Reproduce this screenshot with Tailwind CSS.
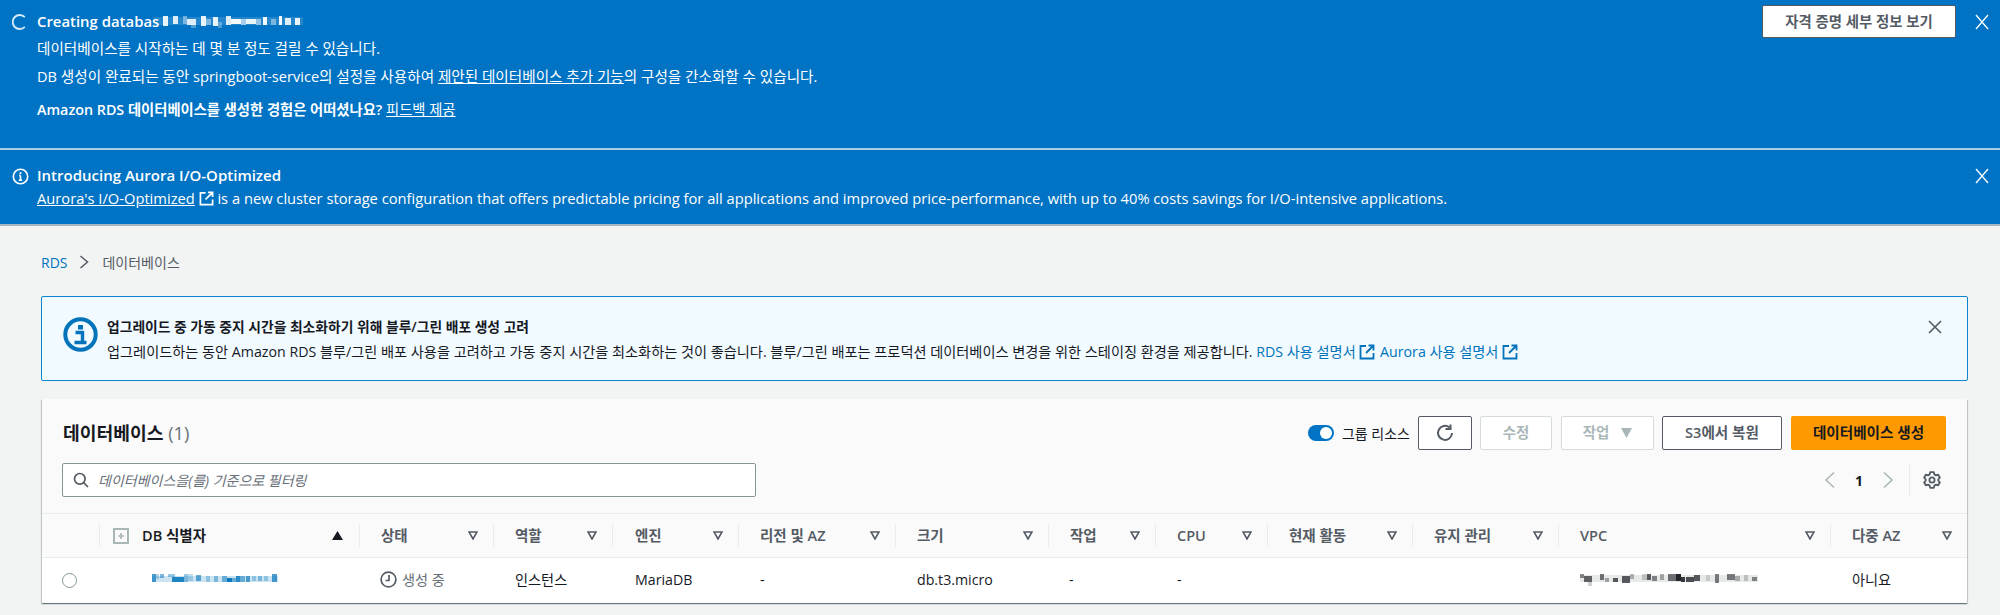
<!DOCTYPE html>
<html lang="ko"><head><meta charset="utf-8">
<script src="https://cdn.jsdelivr.net/npm/@tailwindcss/browser@4"></script>
<title>RDS</title></head>
<body class="w-[2000px] h-[615px] overflow-hidden bg-[#f2f3f3] text-[#16191f] text-[14.6px] font-['Open_Sans','Noto_Sans_CJK_KR',sans-serif]">

<section class="bg-[#0073c4] text-white h-[150px] border-b-2 border-[#a9cfe4] flex pl-[12px] pr-[10px]">
  <svg class="w-[16px] h-[16px] mt-[14px] shrink-0" viewBox="0 0 16 16" fill="none" stroke="#d8ecf8" stroke-width="1.8"><path d="M12.8 3.2A7 7 0 1 0 12.8 12.8"/></svg>
  <div class="ml-[9px] pt-[11px] flex-1">
    <div class="font-semibold leading-[20px] flex items-center text-[14.9px]"><span>Creating databas</span>
      <svg class="w-[150px] h-[14px] ml-[-6px]" viewBox="0 0 150 14" shape-rendering="crispEdges" fill="#fff">
        <rect x="0" y="3" width="150" height="8" opacity=".14"/><rect x="10" y="2" width="5" height="10" opacity=".9"/><rect x="20" y="2" width="5" height="8" opacity=".85"/><rect x="30" y="2" width="4" height="8" opacity=".4"/><rect x="34" y="5" width="9" height="6" opacity=".85"/><rect x="38" y="10" width="5" height="4" opacity=".3"/><rect x="48" y="2" width="5" height="10" opacity=".9"/><rect x="53" y="5" width="5" height="6" opacity=".4"/><rect x="60" y="3" width="5" height="9" opacity=".9"/><rect x="65" y="8" width="4" height="6" opacity=".3"/><rect x="73" y="2" width="5" height="9" opacity=".85"/><rect x="78" y="5" width="10" height="5" opacity=".95"/><rect x="88" y="5" width="5" height="6" opacity=".6"/><rect x="93" y="5" width="10" height="5" opacity=".9"/><rect x="103" y="5" width="5" height="6" opacity=".5"/><rect x="110" y="3" width="4" height="8" opacity=".95"/><rect x="118" y="5" width="5" height="6" opacity=".4"/><rect x="126" y="2" width="3" height="9" opacity=".95"/><rect x="132" y="4" width="6" height="7" opacity=".85"/><rect x="142" y="4" width="5" height="7" opacity=".9"/>
      </svg>
    </div>
    <p class="mt-[7px] leading-[20px]">데이터베이스를 시작하는 데 몇 분 정도 걸릴 수 있습니다.</p>
    <p class="mt-[8px] leading-[20px]">DB 생성이 완료되는 동안 springboot-service의 설정을 사용하여 <a class="underline">제안된 데이터베이스 추가 기능</a>의 구성을 간소화할 수 있습니다.</p>
    <p class="mt-[14px] leading-[20px] font-semibold text-[14.3px]">Amazon RDS 데이터베이스를 생성한 경험은 어떠셨나요? <a class="underline font-normal">피드백 제공</a></p>
  </div>
  <button class="w-[194px] h-[33px] mt-[5px] bg-white border border-[#545b64] rounded-[2px] text-[#545b64] text-[14.4px] font-semibold">자격 증명 세부 정보 보기</button>
  <svg class="w-[16px] h-[16px] mt-[14px] ml-[18px]" viewBox="0 0 16 16" fill="none" stroke="#fff" stroke-width="1.3"><path d="M2 1 14 15M14 1 2 15"/></svg>
</section>

<section class="bg-[#0073c4] text-white h-[76px] border-b-2 border-[#a8b6c0] flex pl-[12px] pr-[10px]">
  <svg class="w-[17px] h-[17px] mt-[18px] shrink-0" viewBox="0 0 17 17" fill="none" stroke="#fff" stroke-width="1.6"><circle cx="8.5" cy="8.5" r="7.2"/><path d="M8.5 7.5v4.5M6.8 12.2h3.4M7.2 7.4h1.3"/><path d="M8.5 4.2v1.8" stroke-width="1.8"/></svg>
  <div class="ml-[8px] pt-[15px] flex-1">
    <div class="font-semibold leading-[20px] text-[15px]">Introducing Aurora I/O-Optimized</div>
    <p class="leading-[20px] mt-[3px] text-[14.7px]"><a class="underline">Aurora's I/O-Optimized</a>
      <svg class="inline w-[15px] h-[15px] align-[-2px]" viewBox="0 0 16 16" fill="none" stroke="#fff" stroke-width="1.8"><path d="M7 2H1.5v12.5h13V9M9.5 1.5h5v5M14.5 1.5 7 9"/></svg>
      is a new cluster storage configuration that offers predictable pricing for all applications and improved price-performance, with up to 40% costs savings for I/O-intensive applications.</p>
  </div>
  <svg class="w-[16px] h-[16px] mt-[18px]" viewBox="0 0 16 16" fill="none" stroke="#fff" stroke-width="1.3"><path d="M2 1 14 15M14 1 2 15"/></svg>
</section>

<nav class="ml-[41px] mt-[26px] h-[20px] flex items-center text-[14px]">
  <a class="text-[#0073bb]">RDS</a>
  <svg class="w-[12px] h-[16px] ml-[11px] mr-[12px]" viewBox="0 0 12 16" fill="none" stroke="#545b64" stroke-width="1.5"><path d="M2.5 2 9.5 8 2.5 14"/></svg>
  <span class="text-[#545b64]">데이터베이스</span>
</nav>

<div class="ml-[41px] mt-[24px] w-[1927px] h-[85px] bg-[#f1faff] border-[1.5px] border-[#0a86d0] rounded-[2px] flex text-[14.2px]">
  <svg class="w-[35px] h-[35px] mt-[20px] ml-[21px] shrink-0" viewBox="0 0 35 35" fill="none" stroke="#0073bb"><circle cx="17.5" cy="17.5" r="15.2" stroke-width="4"/><rect x="15" y="8" width="5" height="4.5" fill="#0073bb" stroke="none"/><path d="M12.5 15.5h7v9M11.5 25.5h12" stroke-width="3.4"/></svg>
  <div class="ml-[9px] pt-[19px] flex-1 leading-[22px]">
    <div class="font-semibold text-[13.8px]">업그레이드 중 가동 중지 시간을 최소화하기 위해 블루/그린 배포 생성 고려</div>
    <p class="mt-[3px]">업그레이드하는 동안 Amazon RDS 블루/그린 배포 사용을 고려하고 가동 중지 시간을 최소화하는 것이 좋습니다. 블루/그린 배포는 프로덕션 데이터베이스 변경을 위한 스테이징 환경을 제공합니다. <a class="text-[#0073bb]">RDS 사용 설명서 <svg class="inline w-[16px] h-[16px] align-[-3px]" viewBox="0 0 16 16" fill="none" stroke="#0073bb" stroke-width="1.8"><path d="M7 2H1.5v12.5h13V9M9.5 1.5h5v5M14.5 1.5 7 9"/></svg></a> <a class="text-[#0073bb] ml-[1px]">Aurora 사용 설명서 <svg class="inline w-[16px] h-[16px] align-[-3px]" viewBox="0 0 16 16" fill="none" stroke="#0073bb" stroke-width="1.8"><path d="M7 2H1.5v12.5h13V9M9.5 1.5h5v5M14.5 1.5 7 9"/></svg></a></p>
  </div>
  <svg class="w-[16px] h-[16px] mt-[22px] mr-[24px]" viewBox="0 0 16 16" fill="none" stroke="#545b64" stroke-width="1.6"><path d="M2 2 14 14M14 2 2 14"/></svg>
</div>

<div class="ml-[42px] mt-[18px] w-[1925px] h-[204px] bg-[#fafafa] shadow-[0_1px_1px_0_rgba(0,28,36,0.4),1px_1px_1px_0_rgba(0,28,36,0.15),-1px_1px_1px_0_rgba(0,28,36,0.15)]">
  <div class="h-[115px] relative border-b border-[#eaeded] pl-[20px] pt-[17px] pr-[21px]">
    <div class="flex items-center h-[34px]">
      <h2 class="text-[18.2px] font-bold flex-1 leading-[32px] ml-[1px]">데이터베이스 <span class="font-normal text-[#687078]">(1)</span></h2>
      <span class="w-[26px] h-[16px] rounded-full bg-[#0073c4] flex items-center justify-end pr-[2px] mr-[8px]"><span class="w-[12px] h-[12px] rounded-full bg-white"></span></span>
      <span class="text-[14px] mr-[8px] text-[#16191f]">그룹 리소스</span>
      <button class="w-[54px] h-[34px] bg-white border border-[#545b64] rounded-[2px] flex items-center justify-center"><svg class="w-[18px] h-[18px]" viewBox="0 0 18 18" fill="none" stroke="#545b64" stroke-width="2"><path d="M13.5 3.5A7 7 0 1 0 16 9"/><path d="M14.5 0.5v4.5h-5"/></svg></button>
      <button class="w-[72px] h-[34px] ml-[8px] bg-white border border-[#d5dbdb] rounded-[2px] text-[#aab7b8] text-[14.4px] font-semibold">수정</button>
      <button class="w-[93px] h-[34px] ml-[9px] bg-white border border-[#d5dbdb] rounded-[2px] text-[#aab7b8] text-[14.4px] font-semibold flex items-center justify-center gap-[12px]">작업<svg class="w-[11px] h-[10px]" viewBox="0 0 11 10" fill="#aab7b8"><path d="M0 0h11L5.5 10z"/></svg></button>
      <button class="w-[120px] h-[34px] ml-[8px] bg-white border border-[#545b64] rounded-[2px] text-[#545b64] text-[14.6px] font-semibold">S3에서 복원</button>
      <button class="w-[155px] h-[34px] ml-[9px] bg-[#ff9900] rounded-[2px] text-[#16191f] text-[14.6px] font-semibold">데이터베이스 생성</button>
    </div>
    <div class="flex items-center mt-[13px] h-[34px]">
      <div class="w-[694px] h-[34px] bg-white border border-[#879596] rounded-[2px] flex items-center pl-[10px]">
        <svg class="w-[16px] h-[16px]" viewBox="0 0 16 16" fill="none" stroke="#545b64" stroke-width="1.7"><circle cx="6.8" cy="6.8" r="5.3"/><path d="M10.6 10.6 15 15"/></svg>
        <span class="ml-[9px] italic text-[#687078] text-[14px]">데이터베이스을(를) 기준으로 필터링</span>
      </div>
      <div class="flex-1"></div>
      <svg class="w-[12px] h-[18px]" viewBox="0 0 12 18" fill="none" stroke="#aab7b8" stroke-width="1.6"><path d="M10 1.5 2 9l8 7.5"/></svg>
      <span class="w-[46px] text-center font-bold text-[14px]">1</span>
      <svg class="w-[12px] h-[18px]" viewBox="0 0 12 18" fill="none" stroke="#aab7b8" stroke-width="1.6"><path d="M2 1.5 10 9l-8 7.5"/></svg>
      <span class="w-px h-[34px] bg-[#eaeded] ml-[15px]"></span>
      <svg class="w-[18px] h-[18px] ml-[13px]" viewBox="0 0 18 18" fill="none" stroke="#545b64" stroke-width="1.8"><circle cx="9" cy="9" r="2.6"/><path d="M7.2 1.2h3.6l.5 2.2 1.7 1 2.2-.7 1.7 3-1.6 1.6v1.4l1.6 1.6-1.7 3-2.2-.7-1.7 1-.5 2.2H7.2l-.5-2.2-1.7-1-2.2.7-1.7-3 1.6-1.6V8.3L1.1 6.7l1.7-3 2.2.7 1.7-1z" stroke-linejoin="round"/></svg>
      <span class="w-[5px]"></span>
    </div>
  </div>

  <div class="grid grid-cols-[57px_260px_134px_119px_126px_157px_153px_107px_112px_145px_146px_272px_137px] h-[44px] items-center border-b border-[#eaeded] text-[14.5px] font-semibold text-[#545b64]">
    <div></div>
    <div class="h-[23px] border-l border-[#eaeded] flex items-center pr-[16px] text-[#16191f]">
      <svg class="w-[16px] h-[16px] ml-[13px]" viewBox="0 0 16 16" fill="none" stroke="#aab7b8"><rect x="1" y="1" width="14" height="14" stroke-width="2"/><path d="M8 5v6M5 8h6" stroke-width="1.6"/></svg>
      <span class="ml-[13px] flex-1">DB 식별자</span>
      <svg class="w-[11px] h-[9px]" viewBox="0 0 11 9" fill="#16191f"><path d="M5.5 0 11 9H0z"/></svg>
    </div>
    <div class="h-[23px] border-l border-[#eaeded] flex items-center justify-between pl-[21px] pr-[15px]">상태<svg class="w-[10px] h-[9px]" viewBox="0 0 10 9" fill="none" stroke="#545b64" stroke-width="1.6"><path d="M1 1h8L5 8z"/></svg></div>
    <div class="h-[23px] border-l border-[#eaeded] flex items-center justify-between pl-[21px] pr-[15px]">역할<svg class="w-[10px] h-[9px]" viewBox="0 0 10 9" fill="none" stroke="#545b64" stroke-width="1.6"><path d="M1 1h8L5 8z"/></svg></div>
    <div class="h-[23px] border-l border-[#eaeded] flex items-center justify-between pl-[22px] pr-[15px]">엔진<svg class="w-[10px] h-[9px]" viewBox="0 0 10 9" fill="none" stroke="#545b64" stroke-width="1.6"><path d="M1 1h8L5 8z"/></svg></div>
    <div class="h-[23px] border-l border-[#eaeded] flex items-center justify-between pl-[21px] pr-[15px]">리전 및 AZ<svg class="w-[10px] h-[9px]" viewBox="0 0 10 9" fill="none" stroke="#545b64" stroke-width="1.6"><path d="M1 1h8L5 8z"/></svg></div>
    <div class="h-[23px] border-l border-[#eaeded] flex items-center justify-between pl-[21px] pr-[15px]">크기<svg class="w-[10px] h-[9px]" viewBox="0 0 10 9" fill="none" stroke="#545b64" stroke-width="1.6"><path d="M1 1h8L5 8z"/></svg></div>
    <div class="h-[23px] border-l border-[#eaeded] flex items-center justify-between pl-[21px] pr-[15px]">작업<svg class="w-[10px] h-[9px]" viewBox="0 0 10 9" fill="none" stroke="#545b64" stroke-width="1.6"><path d="M1 1h8L5 8z"/></svg></div>
    <div class="h-[23px] border-l border-[#eaeded] flex items-center justify-between pl-[21px] pr-[15px]">CPU<svg class="w-[10px] h-[9px]" viewBox="0 0 10 9" fill="none" stroke="#545b64" stroke-width="1.6"><path d="M1 1h8L5 8z"/></svg></div>
    <div class="h-[23px] border-l border-[#eaeded] flex items-center justify-between pl-[21px] pr-[15px]">현재 활동<svg class="w-[10px] h-[9px]" viewBox="0 0 10 9" fill="none" stroke="#545b64" stroke-width="1.6"><path d="M1 1h8L5 8z"/></svg></div>
    <div class="h-[23px] border-l border-[#eaeded] flex items-center justify-between pl-[21px] pr-[15px]">유지 관리<svg class="w-[10px] h-[9px]" viewBox="0 0 10 9" fill="none" stroke="#545b64" stroke-width="1.6"><path d="M1 1h8L5 8z"/></svg></div>
    <div class="h-[23px] border-l border-[#eaeded] flex items-center justify-between pl-[21px] pr-[15px]">VPC<svg class="w-[10px] h-[9px]" viewBox="0 0 10 9" fill="none" stroke="#545b64" stroke-width="1.6"><path d="M1 1h8L5 8z"/></svg></div>
    <div class="h-[23px] border-l border-[#eaeded] flex items-center justify-between pl-[21px] pr-[15px]">다중 AZ<svg class="w-[10px] h-[9px]" viewBox="0 0 10 9" fill="none" stroke="#545b64" stroke-width="1.6"><path d="M1 1h8L5 8z"/></svg></div>
  </div>

  <div class="grid grid-cols-[57px_260px_134px_119px_126px_157px_153px_107px_112px_145px_146px_272px_137px] h-[44px] items-center bg-white text-[14.2px]">
    <div class="pl-[20px]"><span class="block w-[15px] h-[15px] rounded-full bg-white border-[1.5px] border-[#879596]"></span></div>
    <div class="pl-[53px]">
      <svg class="w-[126px] h-[14px] block" viewBox="0 0 126 14" shape-rendering="crispEdges" fill="#0073bb">
        <rect x="0" y="3" width="126" height="6" opacity=".2"/><rect x="0" y="1" width="4" height="8" opacity=".7"/><rect x="4" y="1" width="3" height="5" opacity=".3"/><rect x="8" y="1" width="4" height="4" opacity=".5"/><rect x="16" y="1" width="7" height="3" opacity=".4"/><rect x="20" y="4" width="12" height="5" opacity=".85"/><rect x="32" y="1" width="4" height="8" opacity=".4"/><rect x="36" y="1" width="5" height="7" opacity=".25"/><rect x="44" y="2" width="5" height="6" opacity=".6"/><rect x="54" y="3" width="4" height="6" opacity=".3"/><rect x="62" y="3" width="4" height="6" opacity=".4"/><rect x="70" y="3" width="5" height="6" opacity=".5"/><rect x="75" y="5" width="5" height="4" opacity=".95"/><rect x="80" y="5" width="4" height="4" opacity=".5"/><rect x="84" y="3" width="4" height="6" opacity=".8"/><rect x="88" y="3" width="5" height="6" opacity=".5"/><rect x="94" y="3" width="4" height="6" opacity=".65"/><rect x="100" y="3" width="4" height="5" opacity=".3"/><rect x="106" y="3" width="4" height="5" opacity=".4"/><rect x="112" y="3" width="4" height="5" opacity=".3"/><rect x="120" y="1" width="5" height="8" opacity=".7"/>
      </svg>
    </div>
    <div class="pl-[21px] flex items-center text-[#687078]">
      <svg class="w-[17px] h-[17px] mr-[5px]" viewBox="0 0 17 17" fill="none" stroke="#545b64" stroke-width="1.7"><circle cx="8.5" cy="8.5" r="7.4"/><path d="M9 4v5.5H5.5"/></svg>생성 중
    </div>
    <div class="pl-[22px]">인스턴스</div>
    <div class="pl-[23px]">MariaDB</div>
    <div class="pl-[22px]">-</div>
    <div class="pl-[22px]">db.t3.micro</div>
    <div class="pl-[21px]">-</div>
    <div class="pl-[22px]">-</div>
    <div></div>
    <div></div>
    <div class="pl-[22px]">
      <svg class="w-[178px] h-[16px] block" viewBox="0 0 178 16" shape-rendering="crispEdges" fill="#16191f">
        <rect x="0" y="3" width="178" height="7" opacity=".1"/><rect x="0" y="2" width="4" height="4" opacity=".5"/><rect x="4" y="4" width="8" height="6" opacity=".65"/><rect x="8" y="10" width="4" height="4" opacity=".2"/><rect x="20" y="2" width="4" height="6" opacity=".6"/><rect x="25" y="6" width="4" height="4" opacity=".35"/><rect x="33" y="6" width="5" height="4" opacity=".7"/><rect x="42" y="4" width="8" height="7" opacity=".7"/><rect x="50" y="2" width="4" height="5" opacity=".3"/><rect x="62" y="2" width="5" height="6" opacity=".2"/><rect x="67" y="2" width="4" height="6" opacity=".7"/><rect x="72" y="4" width="5" height="5" opacity=".5"/><rect x="80" y="2" width="4" height="6" opacity=".35"/><rect x="88" y="2" width="8" height="7" opacity=".6"/><rect x="96" y="2" width="5" height="7" opacity=".95"/><rect x="101" y="5" width="4" height="5" opacity=".85"/><rect x="106" y="5" width="8" height="5" opacity=".75"/><rect x="114" y="3" width="6" height="6" opacity=".7"/><rect x="126" y="3" width="4" height="6" opacity=".15"/><rect x="135" y="2" width="4" height="9" opacity=".55"/><rect x="147" y="2" width="8" height="6" opacity=".55"/><rect x="155" y="4" width="5" height="5" opacity=".3"/><rect x="164" y="3" width="4" height="6" opacity=".2"/><rect x="172" y="5" width="5" height="4" opacity=".5"/>
      </svg>
    </div>
    <div class="pl-[22px]">아니요</div>
  </div>
</div>
</body></html>
